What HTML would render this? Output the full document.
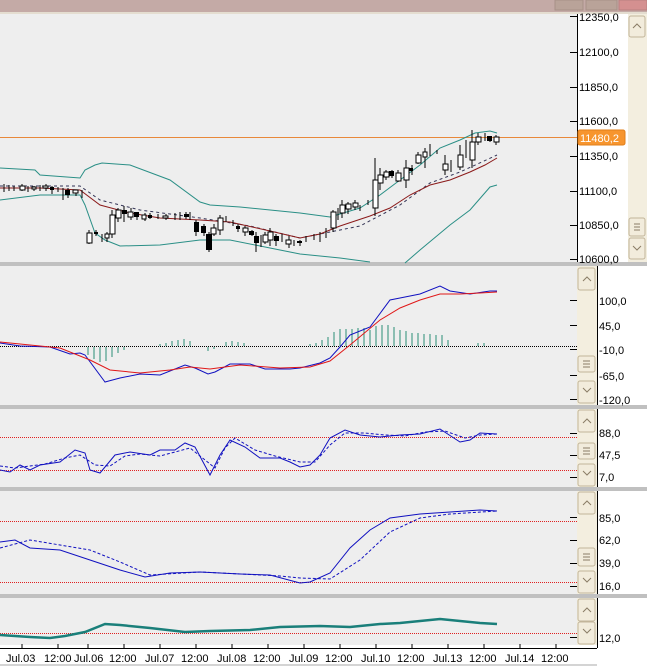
<!DOCTYPE html>
<html><head><meta charset="utf-8"><style>
body{margin:0;width:647px;height:666px;overflow:hidden;background:#fff;font-family:"Liberation Sans",sans-serif}
svg{display:block}
text{font-family:"Liberation Sans",sans-serif;font-size:11px;fill:#000}
</style></head><body>
<svg width="647" height="666" viewBox="0 0 647 666" xmlns="http://www.w3.org/2000/svg">
<!-- top strip -->
<rect x="0" y="0" width="647" height="13" fill="#c4aaa6"/>
<rect x="0" y="12" width="647" height="2" fill="#e4ddd0"/>
<rect x="555" y="0" width="28" height="10" fill="#b9a399" stroke="#a89088"/>
<rect x="586" y="0" width="31" height="10" fill="#b9a399" stroke="#a89088"/>
<rect x="619" y="0" width="28" height="10" fill="#d49090" stroke="#b88080"/>

<!-- pane backgrounds -->
<rect x="0" y="14" width="577" height="248" fill="#eeeeee"/>
<rect x="0" y="266" width="577" height="139" fill="#eeeeee"/>
<rect x="0" y="409" width="577" height="78" fill="#eeeeee"/>
<rect x="0" y="491" width="577" height="103" fill="#eeeeee"/>
<rect x="0" y="598" width="577" height="47" fill="#eeeeee"/>
<!-- separators -->
<rect x="0" y="262" width="647" height="4" fill="#c0c0c0"/>
<rect x="0" y="405" width="647" height="4" fill="#c0c0c0"/>
<rect x="0" y="487" width="647" height="4" fill="#c0c0c0"/>
<rect x="0" y="594" width="647" height="4" fill="#c0c0c0"/>

<!-- main axis -->
<line x1="577.5" y1="14" x2="577.5" y2="262" stroke="#000"/>
<g stroke="#000">
<line x1="570" y1="16.5" x2="577" y2="16.5"/><line x1="570" y1="52.5" x2="577" y2="52.5"/>
<line x1="570" y1="87.5" x2="577" y2="87.5"/><line x1="570" y1="121.5" x2="577" y2="121.5"/>
<line x1="570" y1="156.5" x2="577" y2="156.5"/><line x1="570" y1="191.5" x2="577" y2="191.5"/>
<line x1="570" y1="225.5" x2="577" y2="225.5"/><line x1="570" y1="259.5" x2="577" y2="259.5"/>
</g>
<text x="579" y="21">12350,0</text><text x="579" y="56">12100,0</text>
<text x="579" y="91">11850,0</text><text x="579" y="125">11600,0</text>
<text x="579" y="160">11350,0</text><text x="579" y="195">11100,0</text>
<text x="579" y="229">10850,0</text><text x="579" y="263">10600,0</text>
<rect x="578" y="130" width="47" height="15" rx="2" fill="#f7952e" stroke="#e07f1a"/>
<text x="580" y="142" style="fill:#fff">11480,2</text>
<!-- main scrollbar -->
<rect x="628" y="14" width="19" height="248" fill="#f3eedf"/>
<rect x="629" y="16" width="16" height="21" rx="2" fill="#f2ecdc" stroke="#c2b59a"/>
<path d="M633 28 L637 24 L641 28" fill="none" stroke="#8a7c66"/>
<rect x="629" y="218" width="16" height="18" rx="2" fill="#f2ecdc" stroke="#c2b59a"/>
<path d="M634 224h6M634 227h6M634 230h6" stroke="#8a7c66"/>
<rect x="629" y="238" width="16" height="21" rx="2" fill="#f2ecdc" stroke="#c2b59a"/>
<path d="M633 246 L637 250 L641 246" fill="none" stroke="#8a7c66"/>

<!-- orange price line -->
<line x1="0" y1="137.5" x2="577" y2="137.5" stroke="#e8883a"/>

<!-- bollinger -->
<g fill="none" stroke="#2a8f86" stroke-width="1">
<polyline points="0,168 35,170 40,175 80,178 85,170 95,165 102,163 130,165 170,180 200,202 210,205 240,207 300,213 330,217 360,208 380,195 400,180 420,165 440,148 460,140 475,133 490,131 497,133"/>
<polyline points="0,200 40,195 80,195 85,205 95,233 105,240 120,246 160,245 200,240 230,240 270,248 300,254 340,258 370,262"/>
<polyline points="405,263 420,250 450,225 470,210 490,187 497,185"/>
</g>
<polyline points="0,186 80,186 100,200 140,210 200,218 250,226 300,238 330,232 360,226 400,205 430,183 460,172 497,155" fill="none" stroke="#335" stroke-dasharray="3,3"/>
<polyline points="0,188 40,188 80,190 100,205 130,213 160,218 200,220 230,222 270,231 300,238 320,234 340,226 370,216 390,208 410,195 430,185 450,180 470,172 485,165 497,158" fill="none" stroke="#8b1a1a"/>

<!-- candles -->
<g stroke="#000" stroke-width="1">
<path d="M4 184v8M9 185v6M14 186v5M22 184v7M28 186v6M34 186v5M40 185v6M46 184v7M52 186v8M58 187v5M63 188v12M68 188v10M76 190v6M82 190v8M89 230v14M96 230v6M102 234v8M107 232v10M112 210v28M118 208v14M124 206v16M131 208v12M137 212v8M145 213v8M150 213v6M158 214v5M166 214v6M175 213v7M180 212v8M186 212v7M190 212v8M196 220v16M204 224v12M209 232v20M214 224v12M220 215v20M226 216v6M233 220v6M238 224v8M245 226v10M252 230v6M256 232v20M261 235v12M265 232v12M270 228v18M276 234v12M282 234v8M289 236v12M294 240v6M300 240v6M306 236v6M314 234v6M320 232v10M326 228v10M333 210v22M338 208v12M342 200v18M348 202v12M355 200v10M360 205v6M368 200v5M375 158v58M380 168v22M386 170v10M392 170v8M398 170v12M406 160v28M412 165v10M418 152v12M425 148v20M430 144v12M437 150v4M445 155v20M451 160v12M460 145v25M466 140v18M472 130v38M478 133v12M485 133v8M490 136v6M496 135v10"/>
</g>
<g stroke="#000" fill="#fff">
<rect x="20" y="186" width="5" height="4"/><rect x="32" y="187" width="4" height="2"/><rect x="43" y="186" width="5" height="2"/><rect x="73" y="190" width="5" height="3"/>
<rect x="87" y="233" width="5" height="10"/><rect x="105" y="234" width="4" height="4"/><rect x="110" y="215" width="5" height="19"/><rect x="116" y="210" width="5" height="8"/>
<rect x="128" y="212" width="5" height="5"/><rect x="142" y="215" width="4" height="4"/><rect x="163" y="216" width="5" height="2"/><rect x="211" y="228" width="5" height="6"/>
<rect x="218" y="218" width="5" height="12"/><rect x="243" y="228" width="5" height="4"/><rect x="263" y="235" width="5" height="7"/><rect x="268" y="232" width="5" height="8"/>
<rect x="286" y="240" width="5" height="4"/><rect x="331" y="212" width="5" height="16"/><rect x="340" y="205" width="5" height="8"/><rect x="346" y="204" width="5" height="5"/>
<rect x="353" y="203" width="5" height="4"/><rect x="373" y="180" width="5" height="28"/><rect x="378" y="175" width="5" height="8"/><rect x="384" y="172" width="5" height="5"/>
<rect x="396" y="173" width="5" height="8"/><rect x="404" y="168" width="5" height="12"/><rect x="416" y="155" width="5" height="8"/><rect x="423" y="152" width="4" height="5"/>
<rect x="443" y="164" width="5" height="6"/><rect x="458" y="155" width="5" height="12"/><rect x="470" y="142" width="5" height="18"/><rect x="476" y="137" width="5" height="5"/>
<rect x="494" y="137" width="5" height="5"/>
</g>
<g fill="#000">
<rect x="50" y="187" width="4" height="3"/><rect x="65" y="190" width="5" height="5"/><rect x="94" y="232" width="4" height="2"/><rect x="122" y="210" width="5" height="4"/>
<rect x="134" y="212" width="5" height="5"/><rect x="148" y="215" width="4" height="3"/><rect x="184" y="214" width="5" height="3"/><rect x="194" y="222" width="5" height="10"/>
<rect x="201" y="226" width="5" height="7"/><rect x="206" y="234" width="6" height="16"/><rect x="236" y="226" width="4" height="3"/><rect x="249" y="231" width="5" height="4"/>
<rect x="254" y="236" width="5" height="7"/><rect x="274" y="236" width="5" height="5"/><rect x="297" y="241" width="5" height="2"/><rect x="389" y="171" width="5" height="5"/>
<rect x="409" y="168" width="4" height="3"/><rect x="487" y="136" width="5" height="5"/>
</g>

<!-- MACD pane axis -->
<rect x="577" y="266" width="20" height="139" fill="#f3eedf"/>
<rect x="578" y="268" width="17" height="22" rx="2" fill="#f2ecdc" stroke="#c2b59a"/><path d="M583 281 L587 277 L591 281" fill="none" stroke="#8a7c66"/>
<rect x="578" y="356" width="17" height="16" rx="2" fill="#f2ecdc" stroke="#c2b59a"/><path d="M583 361h7M583 364h7M583 367h7" stroke="#8a7c66"/>
<rect x="578" y="381" width="17" height="22" rx="2" fill="#f2ecdc" stroke="#c2b59a"/><path d="M583 388 L587 392 L591 388" fill="none" stroke="#8a7c66"/>
<line x1="597.5" y1="266" x2="597.5" y2="405" stroke="#000"/>
<g stroke="#000"><line x1="570" y1="300.5" x2="577" y2="300.5"/><line x1="570" y1="325.5" x2="577" y2="325.5"/><line x1="570" y1="349.5" x2="577" y2="349.5"/><line x1="570" y1="375.5" x2="577" y2="375.5"/><line x1="570" y1="399.5" x2="577" y2="399.5"/></g>
<text x="599" y="305">100,0</text><text x="599" y="330">45,0</text><text x="599" y="354">-10,0</text><text x="599" y="380">-65,0</text><text x="599" y="404">-120,0</text>
<line x1="0" y1="346.5" x2="577" y2="346.5" stroke="#000" stroke-dasharray="1,1"/>
<g stroke="#2a8f76">
<path d="M88 347v8M94 347v12M100 347v15M106 347v14M112 347v10M118 347v6M124 347v3M160 346v-2M166 346v-3M172 346v-5M178 346v-6M184 346v-7M190 346v-5M208 347v4M214 347v2M226 346v-4M232 346v-5M238 346v-4M244 346v-3M310 346v-2M316 346v-3M322 346v-6M328 346v-9M334 346v-14M340 346v-17M346 346v-17M352 346v-17M358 346v-18M364 346v-18M370 346v-16M376 346v-20M382 346v-21M388 346v-21M394 346v-19M400 346v-16M406 346v-15M412 346v-13M418 346v-13M424 346v-12M430 346v-12M436 346v-11M442 346v-11M448 346v-6M478 346v-3M484 346v-3"/>
</g>
<polyline points="0,343 20,346 50,347 70,354 80,353 85,355 105,382 120,378 140,374 160,375 185,365 195,368 208,374 215,372 230,364 250,364 265,369 290,369 300,368 320,363 330,358 340,347 350,335 370,327 390,300 400,298 420,294 440,286 450,291 470,294 490,291 497,291" fill="none" stroke="#1010c0"/>
<polyline points="0,342 40,346 60,348 90,360 110,370 140,373 170,370 190,367 210,369 240,365 280,368 310,367 330,361 350,345 380,320 400,308 420,300 440,294 460,294 480,293 497,292" fill="none" stroke="#e01818"/>

<!-- pane 3 -->
<rect x="577" y="409" width="20" height="78" fill="#f3eedf"/>
<rect x="578" y="410" width="17" height="22" rx="2" fill="#f2ecdc" stroke="#c2b59a"/><path d="M583 423 L587 419 L591 423" fill="none" stroke="#8a7c66"/>
<rect x="578" y="443" width="17" height="16" rx="2" fill="#f2ecdc" stroke="#c2b59a"/><path d="M583 448h7M583 451h7M583 454h7" stroke="#8a7c66"/>
<rect x="578" y="464" width="17" height="22" rx="2" fill="#f2ecdc" stroke="#c2b59a"/><path d="M583 471 L587 475 L591 471" fill="none" stroke="#8a7c66"/>
<line x1="597.5" y1="409" x2="597.5" y2="487" stroke="#000"/>
<g stroke="#000"><line x1="570" y1="433.5" x2="577" y2="433.5"/><line x1="570" y1="455.5" x2="577" y2="455.5"/><line x1="570" y1="477.5" x2="577" y2="477.5"/></g>
<text x="599" y="437">88,0</text><text x="599" y="459">47,5</text><text x="599" y="481">7,0</text>
<line x1="0" y1="437.5" x2="577" y2="437.5" stroke="#e02020" stroke-dasharray="1,1"/>
<line x1="0" y1="470.5" x2="577" y2="470.5" stroke="#e02020" stroke-dasharray="1,1"/>
<polyline points="0,470 10,472 20,465 30,470 40,465 60,462 75,450 85,453 90,470 100,473 115,455 130,452 150,455 160,450 175,450 185,443 195,447 210,475 220,455 230,440 245,447 260,458 280,458 290,462 300,467 310,465 320,455 330,438 345,430 360,435 380,437 400,435 420,434 440,429 460,442 470,440 480,433 497,434" fill="none" stroke="#1010c0"/>
<polyline points="0,466 15,468 30,466 45,464 65,458 80,455 95,465 110,466 125,456 140,454 160,456 175,452 190,448 205,460 215,468 225,448 235,438 255,450 275,456 300,462 315,462 330,445 345,433 365,433 385,435 405,436 425,432 445,431 465,438 480,435 497,434" fill="none" stroke="#1010c0" stroke-dasharray="3,2"/>

<!-- pane 4 -->
<rect x="577" y="491" width="20" height="103" fill="#f3eedf"/>
<rect x="578" y="492" width="17" height="22" rx="2" fill="#f2ecdc" stroke="#c2b59a"/><path d="M583 505 L587 501 L591 505" fill="none" stroke="#8a7c66"/>
<rect x="578" y="548" width="17" height="18" rx="2" fill="#f2ecdc" stroke="#c2b59a"/><path d="M583 554h7M583 557h7M583 560h7" stroke="#8a7c66"/>
<rect x="578" y="571" width="17" height="22" rx="2" fill="#f2ecdc" stroke="#c2b59a"/><path d="M583 578 L587 582 L591 578" fill="none" stroke="#8a7c66"/>
<line x1="597.5" y1="491" x2="597.5" y2="594" stroke="#000"/>
<g stroke="#000"><line x1="570" y1="517.5" x2="577" y2="517.5"/><line x1="570" y1="540.5" x2="577" y2="540.5"/><line x1="570" y1="563.5" x2="577" y2="563.5"/><line x1="570" y1="586.5" x2="577" y2="586.5"/></g>
<text x="599" y="522">85,0</text><text x="599" y="544">62,0</text><text x="599" y="567">39,0</text><text x="599" y="590">16,0</text>
<line x1="0" y1="521.5" x2="577" y2="521.5" stroke="#e02020" stroke-dasharray="1,1"/>
<line x1="0" y1="582.5" x2="577" y2="582.5" stroke="#e02020" stroke-dasharray="1,1"/>
<polyline points="0,542 15,540 30,548 60,550 90,560 120,570 145,577 170,573 200,572 240,574 270,575 300,583 310,582 330,573 350,548 370,530 390,518 420,514 450,512 480,510 497,511" fill="none" stroke="#1010c0"/>
<polyline points="0,548 30,540 60,545 90,550 120,562 150,575 200,572 280,576 300,578 330,579 360,560 390,532 420,518 450,514 497,511" fill="none" stroke="#1010c0" stroke-dasharray="3,2"/>

<!-- pane 5 -->
<rect x="577" y="598" width="20" height="47" fill="#f3eedf"/>
<rect x="578" y="599" width="17" height="22" rx="2" fill="#f2ecdc" stroke="#c2b59a"/><path d="M583 612 L587 608 L591 612" fill="none" stroke="#8a7c66"/>
<rect x="578" y="622" width="17" height="22" rx="2" fill="#f2ecdc" stroke="#c2b59a"/><path d="M583 629 L587 633 L591 629" fill="none" stroke="#8a7c66"/>
<line x1="597.5" y1="598" x2="597.5" y2="648" stroke="#000"/>
<line x1="570" y1="637.5" x2="577" y2="637.5" stroke="#000"/>
<text x="599" y="642">12,0</text>
<line x1="0" y1="633.5" x2="577" y2="633.5" stroke="#e02020" stroke-dasharray="1,1"/>
<polyline points="0,635 30,637 50,638 65,636 85,632 105,624 120,625 150,628 185,632 210,631 250,630 280,627 320,626 350,627 380,624 400,623 440,619 460,621 480,623 497,624" fill="none" stroke="#1a7f7a" stroke-width="2.5"/>

<!-- x axis -->
<rect x="0" y="645" width="597" height="21" fill="#fff"/>
<line x1="0" y1="648.5" x2="597" y2="648.5" stroke="#000"/>
<g stroke="#000"><path d="M22 644v4M58 644v4M88 644v4M124 644v4M160 644v4M196 644v4M232 644v4M268 644v4M304 644v4M340 644v4M376 644v4M412 644v4M448 644v4M484 644v4M520 644v4M556 644v4"/></g>
<text x="6" y="662">Jul.03</text><text x="44" y="662">12:00</text><text x="74" y="662">Jul.06</text><text x="109" y="662">12:00</text>
<text x="145" y="662">Jul.07</text><text x="181" y="662">12:00</text><text x="217" y="662">Jul.08</text><text x="253" y="662">12:00</text>
<text x="289" y="662">Jul.09</text><text x="325" y="662">12:00</text><text x="361" y="662">Jul.10</text><text x="397" y="662">12:00</text>
<text x="433" y="662">Jul.13</text><text x="469" y="662">12:00</text><text x="505" y="662">Jul.14</text><text x="541" y="662">12:00</text>
<line x1="0" y1="665" x2="597" y2="665" stroke="#aaa"/>
</svg>
</body></html>
